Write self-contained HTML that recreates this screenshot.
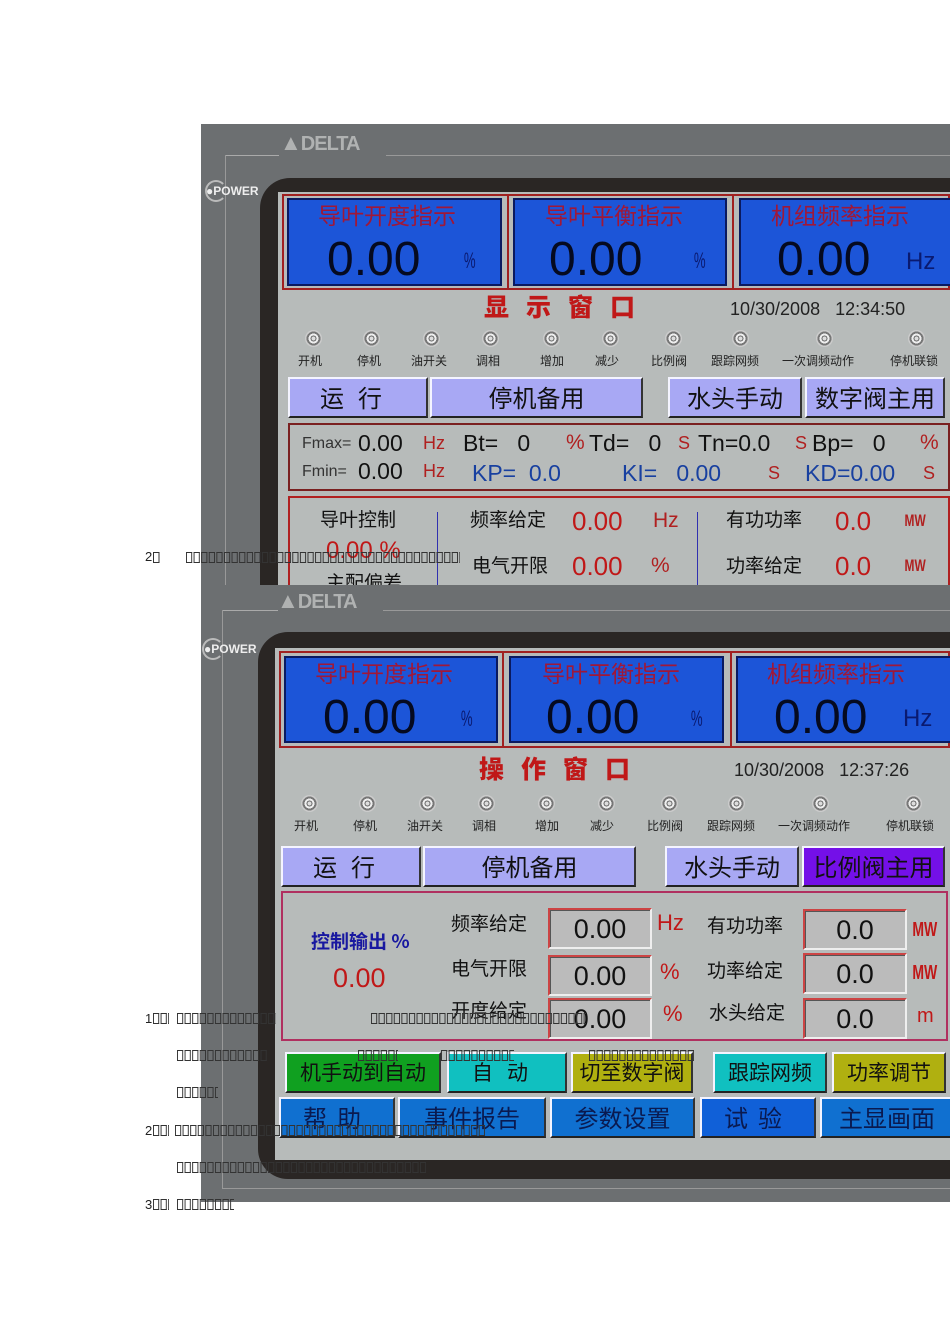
<!DOCTYPE html>
<html><head><meta charset="utf-8"><style>
*{margin:0;padding:0;box-sizing:border-box}
body{width:950px;height:1344px;background:#fff;position:relative;overflow:hidden;font-family:"Liberation Sans","Noto Sans CJK SC",sans-serif}
.a{position:absolute;white-space:nowrap;line-height:1}
.r{position:absolute}
.cj{font-family:"Noto Sans CJK SC","WenQuanYi Zen Hei",sans-serif}
.blue{position:absolute;background:#1c55d8;border:2px solid #0a1a60}
.bt{position:absolute;border:2px solid;border-color:#f4f4ff #333 #222 #f4f4ff;font-family:"Noto Sans CJK SC",sans-serif;text-align:center;color:#111}
.led{position:absolute;width:17px;height:17px;border-radius:50%;background:radial-gradient(circle,#ddd 0 2px,#666 2px 3px,#eee 3px 5px,#777 5px 7px,#ccc 7px)}
.tf{position:absolute;height:11px;background:linear-gradient(90deg,#333 6px,transparent 6px) 0 0/7.6px 1px repeat-x,linear-gradient(90deg,#333 6px,transparent 6px) 0 100%/7.6px 1px repeat-x,linear-gradient(90deg,#333 1px,transparent 1px 5px,#333 5px 6px,transparent 6px) 0 0/7.6px 100% repeat-x}
.num{font-size:11px;color:#111;position:absolute;font-family:"Liberation Sans",sans-serif}
.lb{font-size:12px;color:#222}
.fld{position:absolute;background:#bbb;border:2px solid;border-color:#c44 #eee #eee #c44;box-shadow:inset 1px 1px 0 #555;font-size:27px;text-align:center;color:#111;line-height:38px}
</style></head><body>

<!-- ===== PANEL 1 ===== -->
<div class="r" style="left:201px;top:124px;width:749px;height:461px;background:#6c6f71"></div>
<div class="r" style="left:225px;top:155px;width:54px;height:1px;background:#aaa"></div>
<div class="r" style="left:386px;top:155px;width:564px;height:1px;background:#999"></div>
<div class="r" style="left:225px;top:155px;width:1px;height:430px;background:#999"></div>
<div class="a" style="left:280px;top:130px;font:bold 22px 'Liberation Sans';color:#b0b2b2;letter-spacing:-1px">&#9650;<span style="font-size:20px">DELTA</span></div>
<div class="a" style="left:206px;top:184px;font:bold 12px 'Liberation Sans';color:#eee">&#9679;POWER</div>
<div class="r" style="left:205px;top:180px;width:22px;height:22px;border:2px solid #bbb;border-right-color:transparent;border-radius:50%"></div>
<div class="r" style="left:260px;top:178px;width:690px;height:407px;background:#2a2624;border-radius:30px 0 0 0"></div>
<div class="r" style="left:278px;top:192px;width:672px;height:393px;background:#b7bbba"></div>
<div class="r" style="left:282px;top:194px;width:668px;height:96px;border:2px solid #a02020;background:#b7bbba"></div>
<div class="r" style="left:507px;top:194px;width:2px;height:96px;background:#a02020"></div>
<div class="r" style="left:732px;top:194px;width:2px;height:96px;background:#a02020"></div>
<div class="blue" style="left:287px;top:198px;width:215px;height:88px"></div>
<div class="blue" style="left:513px;top:198px;width:214px;height:88px"></div>
<div class="blue" style="left:739px;top:198px;width:215px;height:88px"></div>
<div class="a cj" style="left:318px;top:203px;font-size:23px;color:#a01838">导叶开度指示</div>
<div class="a cj" style="left:545px;top:203px;font-size:23px;color:#a01838">导叶平衡指示</div>
<div class="a cj" style="left:771px;top:203px;font-size:23px;color:#a01838">机组频率指示</div>
<div class="a" style="left:327px;top:236px;font-size:48px;color:#050a20">0.00</div>
<div class="a" style="left:549px;top:236px;font-size:48px;color:#050a20">0.00</div>
<div class="a" style="left:777px;top:236px;font-size:48px;color:#050a20">0.00</div>
<div class="a" style="left:460px;top:250px;font-size:22px;color:#0a1a70;transform:scaleX(.6)">%</div>
<div class="a" style="left:690px;top:250px;font-size:22px;color:#0a1a70;transform:scaleX(.6)">%</div>
<div class="a" style="left:906px;top:250px;font-size:24px;color:#0a1a70">Hz</div>

<div class="a cj" style="left:484px;top:294px;font-size:25px;font-weight:900;color:#c01818;letter-spacing:17px">显示窗口</div>
<div class="a" style="left:730px;top:300px;font-size:18px;color:#222">10/30/2008 &nbsp;&nbsp;12:34:50</div>

<div class="led" style="left:305px;top:330px"></div><div class="led" style="left:363px;top:330px"></div>
<div class="led" style="left:423px;top:330px"></div><div class="led" style="left:482px;top:330px"></div>
<div class="led" style="left:543px;top:330px"></div><div class="led" style="left:602px;top:330px"></div>
<div class="led" style="left:665px;top:330px"></div><div class="led" style="left:732px;top:330px"></div>
<div class="led" style="left:816px;top:330px"></div><div class="led" style="left:908px;top:330px"></div>
<div class="a cj lb" style="left:298px;top:355px">开机</div>
<div class="a cj lb" style="left:357px;top:355px">停机</div>
<div class="a cj lb" style="left:411px;top:355px">油开关</div>
<div class="a cj lb" style="left:476px;top:355px">调相</div>
<div class="a cj lb" style="left:540px;top:355px">增加</div>
<div class="a cj lb" style="left:595px;top:355px">减少</div>
<div class="a cj lb" style="left:651px;top:355px">比例阀</div>
<div class="a cj lb" style="left:711px;top:355px">跟踪网频</div>
<div class="a cj lb" style="left:782px;top:355px">一次调频动作</div>
<div class="a cj lb" style="left:890px;top:355px">停机联锁</div>

<div class="bt" style="left:288px;top:377px;width:140px;height:41px;background:#a8a8f4;font-size:24px;line-height:36px;letter-spacing:14px">运行</div>
<div class="bt" style="left:430px;top:377px;width:213px;height:41px;background:#a8a8f4;font-size:24px;line-height:36px">停机备用</div>
<div class="bt" style="left:668px;top:377px;width:134px;height:41px;background:#a8a8f4;font-size:24px;line-height:36px">水头手动</div>
<div class="bt" style="left:805px;top:377px;width:140px;height:41px;background:#a8a8f4;font-size:24px;line-height:36px">数字阀主用</div>

<div class="r" style="left:288px;top:423px;width:662px;height:68px;border:2px solid #7a2020"></div>
<div class="a" style="left:302px;top:436px;font-size:16px;color:#333">Fmax=</div>
<div class="a" style="left:358px;top:432px;font-size:23px;color:#111">0.00</div>
<div class="a" style="left:423px;top:434px;font-size:18px;color:#b02020">Hz</div>
<div class="a" style="left:463px;top:432px;font-size:23px;color:#111">Bt= &nbsp;&nbsp;0</div>
<div class="a" style="left:566px;top:432px;font-size:21px;color:#b02020">%</div>
<div class="a" style="left:589px;top:432px;font-size:23px;color:#111">Td= &nbsp;&nbsp;0</div>
<div class="a" style="left:678px;top:434px;font-size:18px;color:#b02020">S</div>
<div class="a" style="left:698px;top:432px;font-size:23px;color:#111">Tn=0.0</div>
<div class="a" style="left:795px;top:434px;font-size:18px;color:#b02020">S</div>
<div class="a" style="left:812px;top:432px;font-size:23px;color:#111">Bp= &nbsp;&nbsp;0</div>
<div class="a" style="left:920px;top:432px;font-size:21px;color:#b02020">%</div>
<div class="a" style="left:302px;top:464px;font-size:16px;color:#333">Fmin=</div>
<div class="a" style="left:358px;top:460px;font-size:23px;color:#111">0.00</div>
<div class="a" style="left:423px;top:462px;font-size:18px;color:#b02020">Hz</div>
<div class="a" style="left:472px;top:462px;font-size:23px;color:#1840a0">KP= &nbsp;0.0</div>
<div class="a" style="left:622px;top:462px;font-size:23px;color:#1840a0">KI= &nbsp;&nbsp;0.00</div>
<div class="a" style="left:768px;top:464px;font-size:18px;color:#b02020">S</div>
<div class="a" style="left:805px;top:462px;font-size:23px;color:#1840a0">KD=0.00</div>
<div class="a" style="left:923px;top:464px;font-size:18px;color:#b02020">S</div>

<div class="r" style="left:288px;top:496px;width:662px;height:89px;border:2px solid #b02020;border-bottom:none"></div>
<div class="r" style="left:437px;top:512px;width:1px;height:73px;background:#3030b0"></div>
<div class="r" style="left:697px;top:512px;width:1px;height:73px;background:#3030b0"></div>
<div class="a cj" style="left:320px;top:509px;font-size:19px;color:#111">导叶控制</div>
<div class="a" style="left:326px;top:539px;font-size:24px;color:#c01818">0.00 %</div>
<div class="a cj" style="left:326px;top:572px;font-size:19px;color:#111">主配偏差</div>
<div class="a cj" style="left:470px;top:509px;font-size:19px;color:#111">频率给定</div>
<div class="a" style="left:572px;top:508px;font-size:26px;color:#c01818">0.00</div>
<div class="a" style="left:653px;top:510px;font-size:21px;color:#b02020">Hz</div>
<div class="a cj" style="left:472px;top:555px;font-size:19px;color:#111">电气开限</div>
<div class="a" style="left:572px;top:553px;font-size:26px;color:#c01818">0.00</div>
<div class="a" style="left:651px;top:555px;font-size:21px;color:#b02020">%</div>
<div class="a cj" style="left:726px;top:509px;font-size:19px;color:#111">有功功率</div>
<div class="a" style="left:835px;top:508px;font-size:26px;color:#c01818">0.0</div>
<div class="a" style="left:900px;top:512px;font-size:17px;font-weight:bold;color:#b02020;transform:scaleX(.7)">MW</div>
<div class="a cj" style="left:726px;top:555px;font-size:19px;color:#111">功率给定</div>
<div class="a" style="left:835px;top:553px;font-size:26px;color:#c01818">0.0</div>
<div class="a" style="left:900px;top:557px;font-size:17px;font-weight:bold;color:#b02020;transform:scaleX(.7)">MW</div>

<div class="a" style="left:145px;top:550px;font-size:13px;color:#222">2</div>
<div class="tf" style="left:153px;top:552px;width:8px"></div>
<div class="tf" style="left:186px;top:552px;width:274px"></div>

<!-- ===== PANEL 2 ===== -->
<div class="r" style="left:201px;top:585px;width:749px;height:617px;background:#6c6f71"></div>
<div class="r" style="left:222px;top:610px;width:56px;height:1px;background:#aaa"></div>
<div class="r" style="left:383px;top:610px;width:567px;height:1px;background:#999"></div>
<div class="r" style="left:222px;top:610px;width:1px;height:578px;background:#999"></div>
<div class="r" style="left:222px;top:1188px;width:728px;height:1px;background:#999"></div>
<div class="a" style="left:277px;top:588px;font:bold 22px 'Liberation Sans';color:#b0b2b2;letter-spacing:-1px">&#9650;<span style="font-size:20px">DELTA</span></div>
<div class="a" style="left:204px;top:642px;font:bold 12px 'Liberation Sans';color:#eee">&#9679;POWER</div>
<div class="r" style="left:202px;top:638px;width:22px;height:22px;border:2px solid #bbb;border-right-color:transparent;border-radius:50%"></div>
<div class="r" style="left:258px;top:632px;width:692px;height:547px;background:#2a2624;border-radius:30px 0 0 30px"></div>
<div class="r" style="left:275px;top:648px;width:675px;height:512px;background:#b7bbba"></div>
<div class="r" style="left:279px;top:651px;width:671px;height:97px;border:2px solid #a02020"></div>
<div class="r" style="left:502px;top:651px;width:2px;height:97px;background:#a02020"></div>
<div class="r" style="left:730px;top:651px;width:2px;height:97px;background:#a02020"></div>
<div class="blue" style="left:284px;top:656px;width:214px;height:87px"></div>
<div class="blue" style="left:509px;top:656px;width:215px;height:87px"></div>
<div class="blue" style="left:736px;top:656px;width:216px;height:87px"></div>
<div class="a cj" style="left:315px;top:661px;font-size:23px;color:#a01838">导叶开度指示</div>
<div class="a cj" style="left:542px;top:661px;font-size:23px;color:#a01838">导叶平衡指示</div>
<div class="a cj" style="left:767px;top:661px;font-size:23px;color:#a01838">机组频率指示</div>
<div class="a" style="left:323px;top:694px;font-size:48px;color:#050a20">0.00</div>
<div class="a" style="left:546px;top:694px;font-size:48px;color:#050a20">0.00</div>
<div class="a" style="left:774px;top:694px;font-size:48px;color:#050a20">0.00</div>
<div class="a" style="left:457px;top:708px;font-size:22px;color:#0a1a70;transform:scaleX(.6)">%</div>
<div class="a" style="left:687px;top:708px;font-size:22px;color:#0a1a70;transform:scaleX(.6)">%</div>
<div class="a" style="left:903px;top:707px;font-size:24px;color:#0a1a70">Hz</div>

<div class="a cj" style="left:479px;top:756px;font-size:25px;font-weight:900;color:#c01818;letter-spacing:17px">操作窗口</div>
<div class="a" style="left:734px;top:761px;font-size:18px;color:#222">10/30/2008 &nbsp;&nbsp;12:37:26</div>

<div class="led" style="left:301px;top:795px"></div><div class="led" style="left:359px;top:795px"></div>
<div class="led" style="left:419px;top:795px"></div><div class="led" style="left:478px;top:795px"></div>
<div class="led" style="left:538px;top:795px"></div><div class="led" style="left:598px;top:795px"></div>
<div class="led" style="left:661px;top:795px"></div><div class="led" style="left:728px;top:795px"></div>
<div class="led" style="left:812px;top:795px"></div><div class="led" style="left:905px;top:795px"></div>
<div class="a cj lb" style="left:294px;top:820px">开机</div>
<div class="a cj lb" style="left:353px;top:820px">停机</div>
<div class="a cj lb" style="left:407px;top:820px">油开关</div>
<div class="a cj lb" style="left:472px;top:820px">调相</div>
<div class="a cj lb" style="left:535px;top:820px">增加</div>
<div class="a cj lb" style="left:590px;top:820px">减少</div>
<div class="a cj lb" style="left:647px;top:820px">比例阀</div>
<div class="a cj lb" style="left:707px;top:820px">跟踪网频</div>
<div class="a cj lb" style="left:778px;top:820px">一次调频动作</div>
<div class="a cj lb" style="left:886px;top:820px">停机联锁</div>

<div class="bt" style="left:281px;top:846px;width:140px;height:41px;background:#a8a8f4;font-size:24px;line-height:36px;letter-spacing:14px">运行</div>
<div class="bt" style="left:423px;top:846px;width:213px;height:41px;background:#a8a8f4;font-size:24px;line-height:36px">停机备用</div>
<div class="bt" style="left:665px;top:846px;width:134px;height:41px;background:#a8a8f4;font-size:24px;line-height:36px">水头手动</div>
<div class="bt" style="left:802px;top:846px;width:143px;height:41px;background:#7410e8;font-size:24px;line-height:36px;color:#111">比例阀主用</div>

<div class="r" style="left:281px;top:891px;width:667px;height:150px;border:2px solid #b03060"></div>
<div class="a cj" style="left:311px;top:931px;font-size:19px;font-weight:bold;color:#1818a0">控制输出 %</div>
<div class="a" style="left:333px;top:965px;font-size:27px;color:#c01818">0.00</div>
<div class="a cj" style="left:451px;top:913px;font-size:19px;color:#111">频率给定</div>
<div class="a cj" style="left:451px;top:958px;font-size:19px;color:#111">电气开限</div>
<div class="a cj" style="left:451px;top:1000px;font-size:19px;color:#111">开度给定</div>
<div class="fld" style="left:548px;top:908px;width:104px;height:41px">0.00</div>
<div class="fld" style="left:548px;top:955px;width:104px;height:41px">0.00</div>
<div class="fld" style="left:548px;top:998px;width:104px;height:41px">0.00</div>
<div class="a" style="left:657px;top:912px;font-size:22px;color:#c01818">Hz</div>
<div class="a" style="left:660px;top:961px;font-size:22px;color:#c01818">%</div>
<div class="a" style="left:663px;top:1003px;font-size:22px;color:#c01818">%</div>
<div class="a cj" style="left:707px;top:915px;font-size:19px;color:#111">有功功率</div>
<div class="a cj" style="left:707px;top:960px;font-size:19px;color:#111">功率给定</div>
<div class="a cj" style="left:709px;top:1002px;font-size:19px;color:#111">水头给定</div>
<div class="fld" style="left:803px;top:909px;width:104px;height:41px">0.0</div>
<div class="fld" style="left:803px;top:953px;width:104px;height:41px">0.0</div>
<div class="fld" style="left:803px;top:998px;width:104px;height:41px">0.0</div>
<div class="a" style="left:907px;top:920px;font-size:20px;font-weight:bold;color:#c01818;transform:scaleX(.7)">MW</div>
<div class="a" style="left:907px;top:963px;font-size:20px;font-weight:bold;color:#c01818;transform:scaleX(.7)">MW</div>
<div class="a" style="left:917px;top:1006px;font-size:20px;color:#c01818">m</div>

<div class="bt" style="left:285px;top:1052px;width:156px;height:41px;background:#10a020;font-size:21px;line-height:36px">机手动到自动</div>
<div class="bt" style="left:447px;top:1052px;width:120px;height:41px;background:#10c0c0;font-size:21px;line-height:36px;letter-spacing:14px">自动</div>
<div class="bt" style="left:571px;top:1052px;width:122px;height:41px;background:#b0b010;font-size:21px;line-height:36px">切至数字阀</div>
<div class="bt" style="left:713px;top:1052px;width:114px;height:41px;background:#10c0c0;font-size:21px;line-height:36px">跟踪网频</div>
<div class="bt" style="left:832px;top:1052px;width:114px;height:41px;background:#b0b010;font-size:21px;line-height:36px">功率调节</div>
<div class="bt" style="left:279px;top:1097px;width:116px;height:41px;background:#1070d0;font-size:24px;line-height:36px;color:#0a1a50;letter-spacing:10px">帮助</div>
<div class="bt" style="left:398px;top:1097px;width:148px;height:41px;background:#1070d0;font-size:24px;line-height:36px;color:#0a1a50">事件报告</div>
<div class="bt" style="left:550px;top:1097px;width:145px;height:41px;background:#1070d0;font-size:24px;line-height:36px;color:#0a1a50">参数设置</div>
<div class="bt" style="left:700px;top:1097px;width:116px;height:41px;background:#1060d8;font-size:24px;line-height:36px;color:#0a1a50;letter-spacing:10px">试验</div>
<div class="bt" style="left:820px;top:1097px;width:134px;height:41px;background:#1070d0;font-size:24px;line-height:36px;color:#0a1a50">主显画面</div>

<!-- tofu text lines -->
<div class="a" style="left:145px;top:1012px;font-size:13px;color:#222">1</div>
<div class="tf" style="left:153px;top:1013px;width:16px"></div>
<div class="tf" style="left:177px;top:1013px;width:99px"></div>
<div class="tf" style="left:371px;top:1013px;width:215px"></div>
<div class="tf" style="left:177px;top:1050px;width:90px"></div>
<div class="tf" style="left:358px;top:1050px;width:40px"></div>
<div class="tf" style="left:441px;top:1050px;width:73px"></div>
<div class="tf" style="left:589px;top:1050px;width:105px"></div>
<div class="tf" style="left:177px;top:1087px;width:41px"></div>
<div class="a" style="left:145px;top:1124px;font-size:13px;color:#222">2</div>
<div class="tf" style="left:153px;top:1125px;width:16px"></div>
<div class="tf" style="left:175px;top:1125px;width:310px"></div>
<div class="tf" style="left:177px;top:1162px;width:249px"></div>
<div class="a" style="left:145px;top:1198px;font-size:13px;color:#222">3</div>
<div class="tf" style="left:153px;top:1199px;width:16px"></div>
<div class="tf" style="left:177px;top:1199px;width:57px"></div>
</body></html>
